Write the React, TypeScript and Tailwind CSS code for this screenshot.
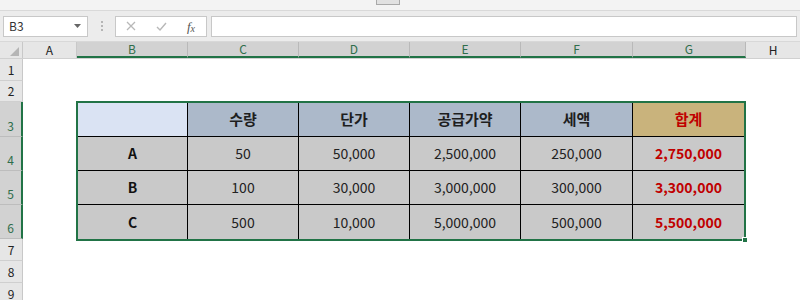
import React from 'react';

const font = { fontFamily: '"Noto Sans CJK KR", "Open Sans", sans-serif' };

const colHeaders = [
  { label: 'A', w: 'w-[54px]', sel: false },
  { label: 'B', w: 'w-[111px]', sel: true },
  { label: 'C', w: 'w-[111px]', sel: true },
  { label: 'D', w: 'w-[111px]', sel: true },
  { label: 'E', w: 'w-[111px]', sel: true },
  { label: 'F', w: 'w-[112px]', sel: true },
  { label: 'G', w: 'w-[113px]', sel: true },
];

const rowHeaders = [
  { label: '1', h: 'h-[22px]', sel: false },
  { label: '2', h: 'h-[21px]', sel: false },
  { label: '3', h: 'h-[35px]', sel: true },
  { label: '4', h: 'h-[34px]', sel: true },
  { label: '5', h: 'h-[34px]', sel: true },
  { label: '6', h: 'h-[34px]', sel: true },
  { label: '7', h: 'h-[22px]', sel: false },
  { label: '8', h: 'h-[22px]', sel: false },
  { label: '9', h: 'h-[22px]', sel: false },
];

const header = ['수량', '단가', '공급가약', '세액'];

const rows = [
  { name: 'A', values: ['50', '50,000', '2,500,000', '250,000'], total: '2,750,000' },
  { name: 'B', values: ['100', '30,000', '3,000,000', '300,000'], total: '3,300,000' },
  { name: 'C', values: ['500', '10,000', '5,000,000', '500,000'], total: '5,500,000' },
];

const App: React.FC = () => {
  return (
    <div className="w-[800px] h-[300px] overflow-hidden bg-white text-[#222]" style={font}>
      {/* Ribbon edge */}
      <div className="h-[11px] bg-[#f3f3f3] border-b border-[#d9d9d9] flex justify-center">
        <div className="ml-[-24px] w-[24px] h-[5px] bg-[#e1e1e1] border border-t-0 border-[#a9a9a9]" />
      </div>

      {/* Formula bar */}
      <div className="h-[31px] bg-[#ececec] flex items-center pl-[3px] pr-[3px] border-b border-[#d8d8d8]">
        <div className="w-[85px] h-[21px] bg-white border border-[#c8c8c8] flex items-center justify-between pl-[5px] pr-[6px] text-[12px] text-[#333]">
          <span>B3</span>
          <svg width="7" height="4" viewBox="0 0 7 4"><path d="M0 0h7L3.5 4z" fill="#666" /></svg>
        </div>
        <div className="w-[27px] flex flex-col items-center gap-[2px]">
          <div className="w-[2px] h-[2px] bg-[#b5b5b5]" />
          <div className="w-[2px] h-[2px] bg-[#b5b5b5]" />
          <div className="w-[2px] h-[2px] bg-[#b5b5b5]" />
        </div>
        <div className="w-[92px] h-[21px] bg-white border border-[#c8c8c8] flex items-center">
          <div className="w-[30px] flex justify-center">
            <svg width="10" height="10" viewBox="0 0 10 10"><path d="M1 1l8 8M9 1l-8 8" stroke="#b8b8b8" strokeWidth="1.3" /></svg>
          </div>
          <div className="w-[30px] flex justify-center">
            <svg width="11" height="9" viewBox="0 0 11 9"><path d="M1 5l3 3 6-7" stroke="#b8b8b8" strokeWidth="1.4" fill="none" /></svg>
          </div>
          <div className="w-[30px] flex justify-center items-baseline text-[13px] italic text-[#555] leading-none" style={{ fontFamily: '"Liberation Serif", serif' }}>
            f<span className="text-[10px] relative top-[1px]">x</span>
          </div>
        </div>
        <div className="ml-[4px] flex-1 h-[21px] bg-white border border-[#c8c8c8]" />
      </div>

      {/* Column headers */}
      <div className="h-[17px] flex bg-[#e6e6e6] text-[12px] border-b border-[#d0d0d0]">
        <div className="w-[23px] border-r border-[#c8c8c8] relative">
          <svg className="absolute right-[3px] bottom-[2px]" width="9" height="9" viewBox="0 0 9 9"><path d="M9 0v9H0z" fill="#b5b5b5" /></svg>
        </div>
        {colHeaders.map((c) => (
          <div
            key={c.label}
            className={`${c.w} flex items-center justify-center border-r ${
              c.sel
                ? 'bg-[#d2d2d2] text-[#2f6e4c] border-[#b9b9b9] border-b-2 border-b-[#217346]'
                : 'text-[#222] border-[#c8c8c8]'
            }`}
          >
            {c.label}
          </div>
        ))}
        <div className="w-[54px] flex items-center justify-center text-[#222]">H</div>
      </div>

      {/* Sheet body */}
      <div className="flex">
        <div className="w-[23px] flex flex-col bg-[#e6e6e6] text-[12px]">
          {rowHeaders.map((r) => (
            <div
              key={r.label}
              className={`${r.h} shrink-0 flex items-end justify-center pb-[1px] border-b ${
                r.sel
                  ? 'bg-[#d2d2d2] text-[#2f6e4c] border-[#bdbdbd] border-r-2 border-r-[#217346]'
                  : 'text-[#222] border-[#cfcfcf] border-r border-r-[#c8c8c8]'
              }`}
            >
              {r.label}
            </div>
          ))}
        </div>

        <div className="flex-1 pt-[42px] pl-[53px]">
          <div className="relative w-[670px] border-2 border-[#217346]">
            <div className="grid grid-cols-[110px_111px_111px_111px_112px_111px] grid-rows-[34px_34px_34px_34px] text-[14px]">
              <div className="bg-[#dae3f3] border-r border-b border-black" />
              {header.map((h) => (
                <div key={h} className="bg-[#acb9ca] border-r border-b border-black flex items-center justify-center text-[15px] font-semibold text-[#1e1e1e]">
                  {h}
                </div>
              ))}
              <div className="bg-[#c9b37c] border-b border-black flex items-center justify-center text-[15px] font-semibold text-[#c00000]">
                합계
              </div>

              {rows.map((r, ri) => {
                const last = ri === rows.length - 1;
                const bb = last ? '' : 'border-b';
                return (
                  <React.Fragment key={r.name}>
                    <div className={`bg-[#c9c9c9] border-r ${bb} border-black flex items-center justify-center font-bold text-[#111]`}>
                      {r.name}
                    </div>
                    {r.values.map((v, vi) => (
                      <div key={vi} className={`bg-[#c9c9c9] border-r ${bb} border-black flex items-center justify-center text-[#222]`}>
                        {v}
                      </div>
                    ))}
                    <div className={`bg-[#c9c9c9] ${bb} border-black flex items-center justify-center font-bold text-[#c00000]`}>
                      {r.total}
                    </div>
                  </React.Fragment>
                );
              })}
            </div>
            <div className="absolute right-[-4px] bottom-[-4px] w-[6px] h-[6px] bg-[#217346] border border-white" />
          </div>
        </div>
      </div>
    </div>
  );
};

export default App;
